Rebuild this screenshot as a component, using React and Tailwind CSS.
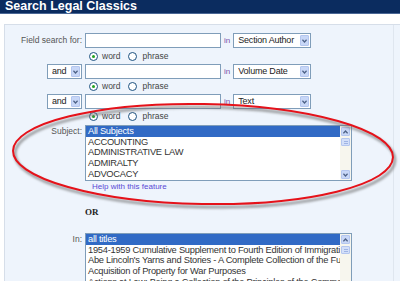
const subjects = ['All Subjects', 'ACCOUNTING', 'ADMINISTRATIVE LAW', 'ADMIRALTY', 'ADVOCACY'];

const titles = [
  'all titles',
  '1954-1959 Cumulative Supplement to Fourth Edition of Immigration Laws of the United States',
  "Abe Lincoln's Yarns and Stories - A Complete Collection of the Funny Stories of Abraham Lincoln",
  'Acquisition of Property for War Purposes',
  'Actions at Law: Being a Collection of the Principles of the Common Law',
  'Admiralty Practice',
];

function Chevron({ up }) {
  return (
    <svg width="5" height="4" viewBox="0 0 5 4">
      <path
        d={up ? 'M0.4 3.3 L2.5 1 L4.6 3.3' : 'M0.4 0.8 L2.5 3 L4.6 0.8'}
        stroke="#4d6185"
        strokeWidth="1.3"
        fill="none"
      />
    </svg>
  );
}

function Select({ value, width }) {
  return (
    <div className={`flex h-[15px] items-center border border-[#7f9db9] bg-white pl-[4px] pr-[1px] ${width}`}>
      <span className="flex-1 truncate text-[9px] leading-none tracking-[-0.2px] text-[#222]">{value}</span>
      <span className="flex h-[11px] w-[9px] items-center justify-center rounded-[1px] border border-[#b4c6ef] bg-[#c8d7f7]">
        <Chevron />
      </span>
    </div>
  );
}

function Radios() {
  return (
    <div className="ml-[84px] flex h-[10px] items-center text-[8.5px] leading-none text-[#444]">
      <span className="flex h-[9px] w-[9px] items-center justify-center rounded-full border border-[#1c5180] bg-white">
        <span className="h-[3px] w-[3px] rounded-full bg-[#21a121]" />
      </span>
      <span className="ml-[4px]">word</span>
      <span className="ml-[8px] h-[9px] w-[9px] rounded-full border border-[#1c5180] bg-white" />
      <span className="ml-[5px]">phrase</span>
    </div>
  );
}

function SearchRow({ first, field }) {
  return (
    <div className="flex h-[15px] items-center">
      <div className="flex w-[80px] justify-end pr-[3px]">
        {first ? (
          <span className="text-[8.5px] leading-none text-[#555]">Field search for:</span>
        ) : (
          <Select value="and" width="w-[35px]" />
        )}
      </div>
      <div className="h-[15px] w-[136px] border border-[#7f9db9] bg-white" />
      <span className="ml-[3px] text-[8px] leading-none text-[#7a4fa8]">in</span>
      <div className="ml-[3px]">
        <Select value={field} width="w-[78px]" />
      </div>
    </div>
  );
}

function Scrollbar() {
  return (
    <div className="flex w-[11px] flex-col items-center bg-[#f7f6ee] py-[1px]">
      <span className="flex h-[9px] w-[9px] items-center justify-center rounded-[1px] border border-[#b4c6ef] bg-[#c8d7f7]">
        <Chevron up />
      </span>
      <span className="mt-[2px] flex h-[8px] w-[9px] flex-col items-center justify-center gap-[1px] rounded-[1px] border border-[#b4c6ef] bg-[#d3dff9]">
        <span className="h-px w-[4px] bg-[#9fb4e4]" />
        <span className="h-px w-[4px] bg-[#9fb4e4]" />
      </span>
      <span className="flex-1" />
      <span className="flex h-[9px] w-[9px] items-center justify-center rounded-[1px] border border-[#b4c6ef] bg-[#c8d7f7]">
        <Chevron />
      </span>
    </div>
  );
}

function ListBox({ items, height }) {
  return (
    <div className={`flex w-[267px] border border-[#7f9db9] bg-white ${height}`}>
      <div className="flex-1 overflow-hidden">
        {items.map((t, i) => (
          <div
            key={t}
            className={`h-[10.7px] whitespace-nowrap pl-[2px] text-[9.3px] leading-[10.7px] tracking-[-0.25px] ${
              i === 0 ? 'bg-[#316ac5] text-white' : 'text-[#333]'
            }`}
          >
            {t}
          </div>
        ))}
      </div>
      <Scrollbar />
    </div>
  );
}

export default function App() {
  return (
    <div className="relative h-[281px] w-[400px] overflow-hidden bg-white font-['Liberation_Sans',Arial,sans-serif]">
      <div className="h-[14px] border-b border-[#4a6795] bg-[#0b2c5f] pl-[5px]">
        <h1 className="text-[12.5px] font-bold leading-[13px] text-white">Search Legal Classics</h1>
      </div>

      <div className="ml-[4px] mt-[10px] h-[300px] border-l border-t border-[#d6dee9] bg-[#eef4fc]">
        <div className="mr-[6px] h-full border-r border-[#dfe6ef] pt-[8px]">
          <SearchRow first field="Section Author" />
          <div className="mt-[3px]"><Radios /></div>
          <div className="mt-[3px]"><SearchRow field="Volume Date" /></div>
          <div className="mt-[2px]"><Radios /></div>
          <div className="mt-[3px]"><SearchRow field="Text" /></div>
          <div className="mt-[2px]"><Radios /></div>

          <div className="mt-[4px] flex">
            <div className="w-[80px] pr-[3px] pt-[1px] text-right text-[8.5px] leading-[10px] text-[#555]">Subject:</div>
            <ListBox items={subjects} height="h-[56px]" />
          </div>
          <div className="ml-[87px] flex h-[12px] items-center text-[8px] leading-none text-[#5a4ad6]">
            Help with this feature
          </div>

          <div className="ml-[80px] mt-[13px] h-[12px] font-['Liberation_Serif',serif] text-[9px] font-bold leading-[12px] text-[#222]">
            OR
          </div>

          <div className="mt-[15px] flex">
            <div className="w-[80px] pr-[3px] pt-[1px] text-right text-[8.5px] leading-[10px] text-[#555]">In:</div>
            <ListBox items={titles} height="h-[80px]" />
          </div>
        </div>
      </div>

      <svg className="pointer-events-none absolute left-0 top-0" width="400" height="281" viewBox="0 0 400 281">
        <defs>
          <filter id="blur" x="-10%" y="-20%" width="120%" height="140%">
            <feGaussianBlur stdDeviation="1.2" />
          </filter>
        </defs>
        <g transform="rotate(1 203 154)">
          <ellipse cx="205" cy="157" rx="190" ry="50" fill="none" stroke="#6b6b6b" strokeOpacity="0.6" strokeWidth="3" filter="url(#blur)" />
          <ellipse cx="203" cy="154" rx="190" ry="50" fill="none" stroke="#e5121a" strokeWidth="2" />
        </g>
      </svg>
    </div>
  );
}
